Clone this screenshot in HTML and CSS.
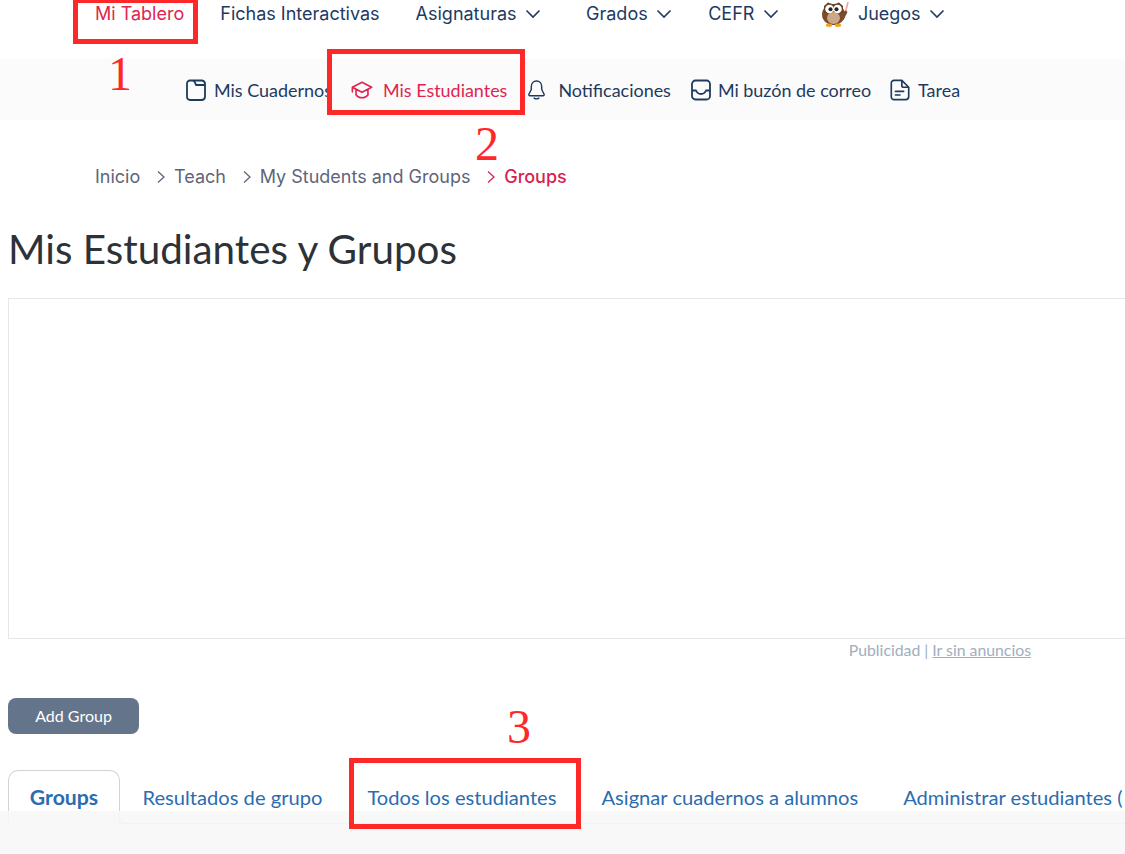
FILE: index.html
```html
<!DOCTYPE html>
<html lang="es">
<head>
<meta charset="utf-8">
<title>Mis Estudiantes y Grupos</title>
<link rel="stylesheet" href="styles.css">
</head>
<body>
<header class="topnav">
  <a class="top-item active">Mi Tablero</a>
  <a class="top-item">Fichas Interactivas</a>
  <a class="top-item">Asignaturas<svg class="chev" viewBox="0 0 16 10"><path d="M1.500 1.500 8 8l6.500-6.500"/></svg></a>
  <a class="top-item wide">Grados<svg class="chev" viewBox="0 0 16 10"><path d="M1.500 1.500 8 8l6.500-6.500"/></svg></a>
  <a class="top-item">CEFR<svg class="chev" viewBox="0 0 16 10"><path d="M1.500 1.500 8 8l6.500-6.500"/></svg></a>
  <a class="top-item games">
    <svg class="owl" viewBox="0 0 28 26">
      <path d="M27 1 24.500 11" stroke="#eaa0a0" stroke-width="1.600" fill="none"/>
      <path d="M20 13l4.500-3.500 2 1.500-4 8z" fill="#7a4a28"/>
      <ellipse cx="12.500" cy="13.500" rx="11.500" ry="10.500" fill="#7c4c2a"/>
      <path d="M3 5 7 1.500 12.500 3.500 18 1.500 22 5v7H3z" fill="#6b3f22"/>
      <ellipse cx="12.500" cy="17" rx="6.500" ry="6" fill="#c9a98a"/>
      <circle cx="8.500" cy="8" r="4.300" fill="#fff"/>
      <circle cx="16.500" cy="8" r="4.300" fill="#fff"/>
      <circle cx="9.500" cy="8.300" r="2" fill="#222"/>
      <circle cx="15.500" cy="8.300" r="2" fill="#222"/>
      <path d="M11 10.500h3L12.500 13.500z" fill="#e5a12a"/>
      <ellipse cx="8" cy="24.200" rx="3.200" ry="1.700" fill="#eaa51f"/>
      <ellipse cx="17" cy="24.200" rx="3.200" ry="1.700" fill="#eaa51f"/>
    </svg>
    <span>Juegos</span><svg class="chev" viewBox="0 0 16 10"><path d="M1.500 1.500 8 8l6.500-6.500"/></svg>
  </a>
</header>

<nav class="subnav">
  <a class="sub-item sub-first"><svg class="ico" viewBox="0 0 20 22"><path d="M1 4.500A3 3 0 0 1 4 1.500h12A3.500 3.500 0 0 1 19 5v13a3.500 3.500 0 0 1-3.500 3H4a3 3 0 0 1-3-3zM6.500 1.500c2 .5 3 2 3.500 4.500h9M13 6h3" /></svg><span>Mis Cuadernos</span></a>
  <a class="sub-item sub-current"><svg class="ico cap" viewBox="0 0 24 20"><path d="M1.500 7 12 1.500 22.500 7 12 12.500zM5.500 9.500v6C7 17.500 9.500 18.500 12 18.500s5-1 6.500-3v-6M1.500 7v5"/></svg>Mis Estudiantes</a>
  <a class="sub-item"><svg class="ico bell" viewBox="0 0 20 22"><path d="M10 1.500c-3.500 0-5.500 2.800-5.500 6v3L2 15.500c-.3.800.2 1.500 1 1.500h14c.8 0 1.300-.7 1-1.500l-2.500-5v-3c0-3.200-2-6-5.500-6zM7.500 19.500c1.500 1 3.500 1 5 0"/></svg>Notificaciones</a>
  <a class="sub-item sub-inbox"><svg class="ico tight" viewBox="0 0 20 22"><path d="M1 5A3.500 3.500 0 0 1 4.500 1.500h11A3.500 3.500 0 0 1 19 5v12a3.500 3.500 0 0 1-3.500 3.500h-11A3.500 3.500 0 0 1 1 17zM1 11.500h4c1 2.500 3 3.500 5 3.500s4-1 5-3.500h4"/></svg>Mi buzón de correo</a>
  <a class="sub-item"><svg class="ico doc" viewBox="0 0 22 24"><path d="M4.500 1.500h8.500L20.500 9v10a3.500 3.500 0 0 1-3.500 3.500H4.500A3 3 0 0 1 1.500 19.500v-15a3 3 0 0 1 3-3zM13 1.500V7a2 2 0 0 0 2 2h5.500M6 13.500h9M6 17.500h5"/></svg>Tarea</a>
</nav>

<ol class="crumbs">
  <li>Inicio</li>
  <li class="sep"><svg class="crumb-arrow" viewBox="0 0 8 14"><path d="M1 1.500 7 7l-6 5.500"/></svg></li>
  <li>Teach</li>
  <li class="sep"><svg class="crumb-arrow" viewBox="0 0 8 14"><path d="M1 1.500 7 7l-6 5.500"/></svg></li>
  <li>My Students and Groups</li>
  <li class="sep sep-current"><svg class="crumb-arrow" viewBox="0 0 8 14"><path d="M1 1.500 7 7l-6 5.500"/></svg></li>
  <li class="crumb-current">Groups</li>
</ol>

<main class="content">
  <h1 class="title">Mis Estudiantes y Grupos</h1>
  <div class="adbox"></div>
  <p class="adnote">Publicidad | <a class="adlink">Ir sin anuncios</a></p>
  <button class="btn" type="button">Add Group</button>
  <div class="tabs">
    <a class="tab tab-active">Groups</a>
    <a class="tab">Resultados de grupo</a>
    <a class="tab">Todos los estudiantes</a>
    <a class="tab">Asignar cuadernos a alumnos</a>
    <a class="tab">Administrar estudiantes (</a>
  </div>
</main>

<div class="footer-veil"></div>

<div class="mark mark-1"></div>
<div class="mark mark-2"></div>
<div class="mark mark-3"></div>
<span class="num num-1">1</span>
<span class="num num-2">2</span>
<span class="num num-3">3</span>
</body>
</html>
```
FILE: styles.css
```css
* { box-sizing: border-box; }
html, body { margin: 0; height: 854px; overflow: hidden; background: #fff; }
body { position: relative; font-family: "Lato", sans-serif; color: #1e3a5f; }

.topnav {
  height: 59px;
  display: flex;
  align-items: flex-start;
  padding-left: 95px;
  gap: 36px;
  font-family: "Inter", sans-serif;
  font-size: 18px;
  line-height: 28px;
  color: #1e3a5f;
}
.top-item { display: flex; align-items: center; white-space: nowrap; }
.top-item.active { color: #e0244f; }
.top-item.wide { margin-left: 9px; }
.top-item.games { margin-left: 6px; }
.chev { width: 16px; height: 10px; margin-left: 8.500px; fill: none; stroke: #1e3a5f; stroke-width: 1.600; }
.owl { width: 28px; height: 26px; margin-right: 9px; margin-top: -1px; }

.subnav {
  height: 61px;
  background: #fbfbfc;
  display: flex;
  align-items: center;
  padding-left: 186px;
  font-size: 17.950px;
  line-height: 24px;
  color: #1e3a5f;
}
.sub-item { display: flex; align-items: center; white-space: nowrap; margin-right: 20px; }
.sub-first { width: 145px; overflow: hidden; }
.sub-current { color: #e0244f; }
.sub-inbox { margin-right: 18px; }
.ico { width: 20px; height: 22px; margin-right: 8px; fill: none; stroke: #1e3a5f; stroke-width: 1.800; stroke-linejoin: round; stroke-linecap: round; flex: none; }
.ico.cap { width: 22px; height: 20px; margin-right: 10px; stroke: #e0244f; }
.ico.bell { width: 19px; margin-right: 12px; stroke-width: 1.500; }
.ico.tight { margin-right: 7px; }
.ico.doc { width: 22px; margin-right: 7px; }

.crumbs {
  list-style: none;
  display: flex;
  align-items: center;
  margin: 0;
  padding: 46px 0 0 95px;
  height: 68px;
  font-family: "Inter", sans-serif;
  font-size: 18px;
  line-height: 26px;
  color: #5f6579;
}
.sep { display: flex; margin: 0 9px 0 16.750px; }
.sep-current { color: #e0244f; }
.crumb-arrow { width: 8px; height: 14px; fill: none; stroke: currentColor; stroke-width: 1.300; }
.crumb-current { color: #d81f4f; font-weight: 500; }

.content { padding-left: 8px; }
.title {
  margin: 36px 0 0;
  font-size: 40.400px;
  line-height: 50px;
  font-weight: 400;
  color: #2d3238;
}
.adbox { margin-top: 24px; height: 341px; border: 1px solid #e5e7eb; border-right: 0; background: #fff; }
.adnote {
  margin: 2px 0 0;
  width: 1023px;
  text-align: right;
  font-size: 15.800px;
  line-height: 18px;
  color: #a0aec0;
}
.adlink { text-decoration: underline; }
.btn {
  display: block;
  margin-top: 39px;
  width: 131px;
  height: 36px;
  padding: 0 0 2px;
  border: 0;
  border-radius: 8px;
  background: #64748b;
  color: #fff;
  font-family: "Lato", sans-serif;
  font-size: 16px;
}
.tabs {
  display: flex;
  margin-top: 36px;
  height: 54px;
  border-bottom: 1px solid #c9c9c9;
  font-size: 20.150px;
  color: #2b6cb0;
}
.tab { padding: 14px 22.500px 0; line-height: 26px; white-space: nowrap; }
.tab-active {
  position: relative;
  flex: none;
  width: 112px;
  margin-bottom: -1px;
  padding: 13px 0 0;
  text-align: center;
  border: 1px solid #d0d3d8;
  border-bottom: 0;
  border-radius: 10px 10px 0 0;
  font-size: 21.200px;
  font-weight: 700;
  background: #fff;
}
.tab-active::after {
  content: "";
  position: absolute;
  right: -10px;
  bottom: 0;
  width: 10px;
  height: 10px;
  border-left: 1px solid #c9c9c9;
  border-bottom: 1px solid #c9c9c9;
  border-bottom-left-radius: 10px;
  background: #fff;
}
.footer-veil {
  position: absolute;
  left: 0; right: 0; top: 811px; bottom: 0;
  background: rgba(247, 247, 247, .9);
}

.mark { position: absolute; border: 5px solid #ff2828; }
.mark-1 { left: 73px; top: -2px; width: 125px; height: 46px; }
.mark-2 { left: 327px; top: 49px; width: 198px; height: 66px; }
.mark-3 { left: 349px; top: 758px; width: 232px; height: 71px; }
.num {
  position: absolute;
  font-family: "Liberation Serif", serif;
  font-size: 48px;
  line-height: 48px;
  color: #ff2828;
}
.num-1 { left: 108px; top: 50px; }
.num-2 { left: 475px; top: 120px; }
.num-3 { left: 507px; top: 703px; }
```
